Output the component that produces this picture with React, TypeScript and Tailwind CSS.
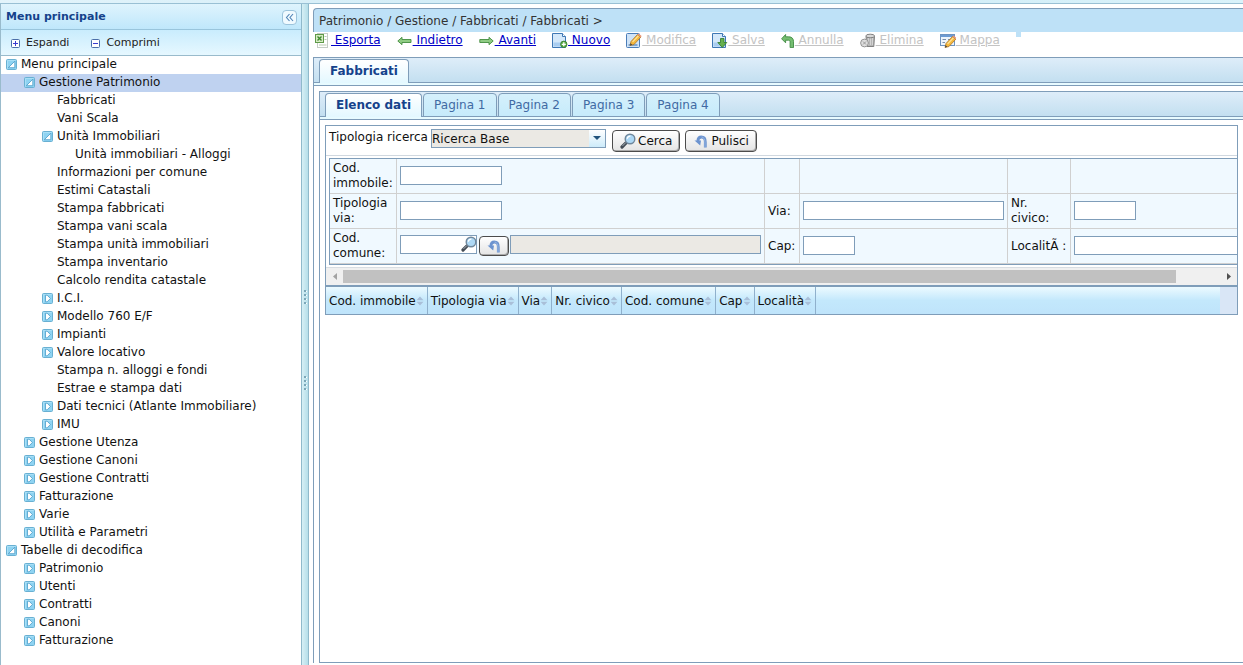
import type { ReactNode } from "react";

type Node = {
  label: string;
  level: 0 | 1 | 2 | 3;
  state?: "open" | "closed";
  selected?: boolean;
};

const tree: Node[] = [
  { label: "Menu principale", level: 0, state: "open" },
  { label: "Gestione Patrimonio", level: 1, state: "open", selected: true },
  { label: "Fabbricati", level: 2 },
  { label: "Vani Scala", level: 2 },
  { label: "Unità Immobiliari", level: 2, state: "open" },
  { label: "Unità immobiliari - Alloggi", level: 3 },
  { label: "Informazioni per comune", level: 2 },
  { label: "Estimi Catastali", level: 2 },
  { label: "Stampa fabbricati", level: 2 },
  { label: "Stampa vani scala", level: 2 },
  { label: "Stampa unità immobiliari", level: 2 },
  { label: "Stampa inventario", level: 2 },
  { label: "Calcolo rendita catastale", level: 2 },
  { label: "I.C.I.", level: 2, state: "closed" },
  { label: "Modello 760 E/F", level: 2, state: "closed" },
  { label: "Impianti", level: 2, state: "closed" },
  { label: "Valore locativo", level: 2, state: "closed" },
  { label: "Stampa n. alloggi e fondi", level: 2 },
  { label: "Estrae e stampa dati", level: 2 },
  { label: "Dati tecnici (Atlante Immobiliare)", level: 2, state: "closed" },
  { label: "IMU", level: 2, state: "closed" },
  { label: "Gestione Utenza", level: 1, state: "closed" },
  { label: "Gestione Canoni", level: 1, state: "closed" },
  { label: "Gestione Contratti", level: 1, state: "closed" },
  { label: "Fatturazione", level: 1, state: "closed" },
  { label: "Varie", level: 1, state: "closed" },
  { label: "Utilità e Parametri", level: 1, state: "closed" },
  { label: "Tabelle di decodifica", level: 0, state: "open" },
  { label: "Patrimonio", level: 1, state: "closed" },
  { label: "Utenti", level: 1, state: "closed" },
  { label: "Contratti", level: 1, state: "closed" },
  { label: "Canoni", level: 1, state: "closed" },
  { label: "Fatturazione", level: 1, state: "closed" },
];

const indent = {
  0: "pl-[5px]",
  1: "pl-[23px]",
  2: "pl-[41px]",
  3: "pl-[59px]",
};

const columns = [
  "Cod. immobile",
  "Tipologia via",
  "Via",
  "Nr. civico",
  "Cod. comune",
  "Cap",
  "Località",
];

function TreeIcon({ state }: { state: "open" | "closed" }) {
  return (
    <svg width="11" height="11" viewBox="0 0 11 11">
      <rect x="0.5" y="0.5" width="10" height="10" rx="1" fill="#8ed3f2" stroke="#69b0d2" />
      <path d="M1.5 9.5V1.5H9.5" fill="none" stroke="#a9dff6" />
      {state === "open" ? (
        <path d="M8.8 2.2V8.7H2.3Z" fill="#fff" stroke="#4a9cc8" strokeWidth="0.8" />
      ) : (
        <path d="M3.5 2.2H5.2L8.4 5.5L5.2 8.8H3.5Z" fill="#fff" stroke="#4a9cc8" strokeWidth="0.8" />
      )}
    </svg>
  );
}

function BoxIcon({ plus }: { plus?: boolean }) {
  return (
    <svg width="9" height="9" viewBox="0 0 9 9">
      <rect x="0.5" y="0.5" width="8" height="8" rx="1" fill="#fff" stroke="#4a6ea9" />
      <path d={plus ? "M2 4.5H7M4.5 2V7" : "M2 4.5H7"} stroke="#3b3bd0" />
    </svg>
  );
}

function Icon({ width = 16, children }: { width?: number; children: ReactNode }) {
  return (
    <svg width={width} height="16" viewBox={`0 0 ${width} 16`} className="shrink-0">
      {children}
    </svg>
  );
}

const PageShape = () => (
  <>
    <path d="M0.5 1.5H10.5L13.5 4.5V15.5H0.5Z" fill="#d4e8fa" stroke="#3f78b5" />
    <path d="M1.5 10.5H12.5V14.5H1.5Z" fill="#a9cdf0" />
    <path d="M10.5 1.5V4.5H13.5" fill="#fff" stroke="#3f78b5" />
  </>
);

const Pencil = () => (
  <>
    <path d="M4 13.5L5 9.5L11.5 2.5L14.8 5.2L8 12.5Z" fill="#f5b83d" stroke="#a8742a" strokeWidth="0.8" />
    <path d="M6.6 9.8L12.4 3.9" stroke="#fde7a0" strokeWidth="1.2" />
    <path d="M4 13.5L4.6 11.2L6.3 12.8Z" fill="#444" />
    <path d="M11.5 2.5L12.5 1.4L15.7 4.1L14.8 5.2Z" fill="#e9967a" />
  </>
);

const ResetArrow = () => (
  <>
    <path d="M12.3 14.5V9C12.3 5.5 10.6 4 8.3 4C6 4 5 5.8 4.8 8" fill="none" stroke="#6c93cf" strokeWidth="2.8" />
    <path d="M1.5 7.5H8L7.2 12.5L5.5 11Z" fill="#6c93cf" />
    <path d="M12 14V9C12 6 10.8 4.4 8.6 4" fill="none" stroke="#97b6e2" />
  </>
);

const Magnifier = () => (
  <>
    <path d="M6.3 9.7L2 14" stroke="#444c55" strokeWidth="3.2" strokeLinecap="round" />
    <path d="M6 9.4L2.5 12.9" stroke="#a9b3bb" strokeWidth="1" />
    <circle cx="10" cy="6" r="4.8" fill="#add8f5" stroke="#70879b" strokeWidth="1.4" />
    <path d="M7.3 5.8C7.5 4.2 8.8 3.2 10.4 3.2" stroke="#fff" strokeWidth="1.2" fill="none" />
  </>
);

const actions: { label: string; disabled?: boolean; width?: number; icon: ReactNode }[] = [
  {
    label: "Esporta",
    icon: (
      <>
        <path d="M2.5 1.5H12.5V15.5H2.5Z" fill="#fff" stroke="#8a9a8a" strokeDasharray="1 1" />
        <path d="M9.5 4.5H11.5M9.5 7.5H11.5M4 13H11.5" stroke="#b8c8b0" />
        <rect x="0.5" y="2.5" width="8" height="8" fill="#d6ebc3" stroke="#5f9a48" />
        <path d="M2.5 4.5L6.5 8.5M6.5 4.5L2.5 8.5" stroke="#3d8a2c" strokeWidth="1.4" />
      </>
    ),
  },
  {
    label: "Indietro",
    icon: (
      <path d="M0.8 9L5 5.3V7.5H14V10.5H5V12.7Z" fill="#8fcb83" stroke="#438c3e" strokeWidth="0.9" />
    ),
  },
  {
    label: "Avanti",
    icon: (
      <path d="M14.2 9L10 5.3V7.5H0.8V10.5H10V12.7Z" fill="#8fcb83" stroke="#438c3e" strokeWidth="0.9" />
    ),
  },
  {
    label: "Nuovo",
    icon: (
      <>
        <PageShape />
        <circle cx="11.8" cy="12.3" r="3.2" fill="#5fae4a" stroke="#2f7a2a" strokeWidth="0.8" />
        <path d="M9.8 12.3H13.8M11.8 10.3V14.3" stroke="#fff" strokeWidth="1.3" />
      </>
    ),
  },
  {
    label: "Modifica",
    disabled: true,
    icon: (
      <>
        <rect x="0.5" y="1.5" width="13" height="14" rx="1" fill="#cfe3f7" stroke="#4a7db8" />
        <path d="M2.5 13H11.5" stroke="#7da7d6" strokeWidth="2" />
        <Pencil />
      </>
    ),
  },
  {
    label: "Salva",
    disabled: true,
    icon: (
      <>
        <PageShape />
        <path d="M8.5 6.5H12V10.5H14.8L10.3 15.5L5.8 10.5H8.5Z" fill="#67b04e" stroke="#2f7a2a" strokeWidth="0.8" />
      </>
    ),
  },
  {
    label: "Annulla",
    disabled: true,
    width: 14,
    icon: (
      <path d="M0.6 6.8L4.6 2.5V4.8H7.5C11 4.8 12.5 6.8 12.5 9.5V15.6H9.1V10C9.1 8.8 8.5 8.2 7.5 8.2H4.6V10.8Z" fill="#74bd70" stroke="#3f8a42" strokeWidth="0.9" />
    ),
  },
  {
    label: "Elimina",
    disabled: true,
    icon: (
      <>
        <path d="M6 4.5H14.5L13.8 14.5H7Z" fill="#b5b5b5" stroke="#777" strokeWidth="0.9" />
        <path d="M8.5 6V13M10.5 6V13M12.5 6V13" stroke="#d4d4d4" />
        <ellipse cx="10.2" cy="4" rx="4.4" ry="1.8" fill="#d8d8d8" stroke="#777" strokeWidth="0.9" />
        <circle cx="4.5" cy="11" r="3.9" fill="#dedede" stroke="#8a8a8a" strokeWidth="0.9" />
        <path d="M3 9.5L6 12.5M6 9.5L3 12.5" stroke="#9a9a9a" />
      </>
    ),
  },
  {
    label: "Mappa",
    disabled: true,
    icon: (
      <>
        <rect x="0.5" y="2.5" width="14" height="11" fill="#eef5fc" stroke="#6f94c0" />
        <path d="M1 4H14" stroke="#6d9bd3" strokeWidth="2" />
        <path d="M2.5 7.5H6M2.5 10.5H5M8 7.5H12" stroke="#7b8fa8" />
        <g transform="translate(1 2)">
          <Pencil />
        </g>
      </>
    ),
  },
];

function Tab({ label, active }: { label: string; active?: boolean }) {
  return (
    <button
      role="tab"
      aria-selected={!!active}
      className={
        active
          ? "h-6 rounded-t border border-b-0 border-[#7f9db9] bg-gradient-to-b from-white to-[#e3f8ff] px-2.5 pb-0.5 font-bold text-[#15428b]"
          : "h-6 rounded-t border border-[#7f9db9] bg-gradient-to-b from-[#d5f0fc] to-[#c6ebfb] px-2.5 text-[#416aa3]"
      }
    >
      {label}
    </button>
  );
}

function TabStrip({ children }: { children: ReactNode }) {
  return (
    <div className="border-y border-[#7f9db9] bg-[#e8fbff] pb-0.5">
      <div
        role="tablist"
        className="flex h-[25px] items-end border-b border-[#7f9db9] bg-gradient-to-b from-[#deedf9] to-[#c3dff0] pl-[5px]"
      >
        <div className="-mb-px flex gap-px">{children}</div>
      </div>
    </div>
  );
}

function Field({ id, className }: { id: string; className: string }) {
  return (
    <input
      id={id}
      type="text"
      className={`block h-[19px] border border-[#7f9db9] bg-white px-1 ${className}`}
    />
  );
}

const cell = "h-[35px] border-r border-b border-[#d0d0d0] px-[3px] leading-[15px]";
const fieldCell = `${cell} pb-0.5`;
const button =
  "flex items-center rounded-sm border border-[#4c4c4c] bg-gradient-to-b from-white to-[#e4e4e4] shadow-[inset_-1px_-1px_0_#aaa]";

function Sidebar() {
  return (
    <aside className="flex w-[301px] shrink-0 flex-col border-l border-[#99bbcc]">
      <div className="flex h-[26px] items-center justify-between border-b border-[#99c5dc] bg-gradient-to-b from-[#dff4fd] to-[#bfe7fb] pt-0.5 pr-1 pl-[5px]">
        <h2 className="text-[11px] font-bold text-[#15428b]">Menu principale</h2>
        <button
          aria-label="Chiudi il menu"
          className="flex h-[15px] w-[15px] items-center justify-center rounded-sm border border-[#9cc4dc] bg-[#f0faff]"
        >
          <svg width="9" height="9" viewBox="0 0 9 9">
            <path d="M4.5 1L1.5 4.5L4.5 8M8 1L5 4.5L8 8" fill="none" stroke="#4f83b5" strokeWidth="1.1" />
          </svg>
        </button>
      </div>
      <div className="flex h-[26px] items-center border-b border-[#99bbcc] bg-gradient-to-b from-[#c9ecfd] to-[#e6f8ff] pt-0.5 pl-2.5 text-[11px] text-[#222]">
        <button className="flex items-center gap-1.5">
          <BoxIcon plus />
          Espandi
        </button>
        <button className="ml-[22px] flex items-center gap-1.5">
          <BoxIcon />
          Comprimi
        </button>
      </div>
      <ul>
        {tree.map((node, i) => (
          <li
            key={i}
            className={`flex h-[18px] items-center pb-0.5 ${indent[node.level]} ${
              node.selected ? "bg-[#bfd2f0]" : ""
            }`}
          >
            <span className="w-[15px] pt-px">
              {node.state && <TreeIcon state={node.state} />}
            </span>
            <a href="#" className="leading-4 whitespace-nowrap">
              {node.label}
            </a>
          </li>
        ))}
      </ul>
    </aside>
  );
}

function Dots() {
  return (
    <svg width="4" height="14" viewBox="0 0 4 14">
      {[0, 4, 8, 12].map((y) => (
        <g key={y}>
          <rect x="1" y={y + 1} width="3" height="1" fill="#fff" />
          <rect x="1" y={y} width="2" height="2" fill="#7ba7b8" />
        </g>
      ))}
    </svg>
  );
}

function SearchForm() {
  return (
    <form onSubmit={(e) => e.preventDefault()}>
      <div className="flex h-[30px] items-start border-b border-[#d0d8e0] pt-[3px] pl-[3px]">
        <label htmlFor="tipo" className="w-[102px] whitespace-nowrap">
          Tipologia ricerca
        </label>
        <div className="relative">
          <select
            id="tipo"
            className="block h-[19px] w-[175px] appearance-none border border-[#7f9db9] bg-[#ebe9e4]"
          >
            <option>Ricerca Base</option>
          </select>
          <span className="pointer-events-none absolute top-px right-px flex h-[17px] w-4 justify-center bg-gradient-to-b from-white to-[#cdebfa] pt-1.5">
            <svg width="8" height="4" viewBox="0 0 8 4">
              <path d="M0 0H8L4 4Z" fill="#22547d" />
            </svg>
          </span>
        </div>
        <button type="submit" className={`${button} ml-1.5 mt-px h-[22px] gap-0.5 px-[7px]`}>
          <Icon>
            <Magnifier />
          </Icon>
          Cerca
        </button>
        <button type="reset" className={`${button} ml-[5px] mt-px h-[22px] gap-0.5 px-[7px]`}>
          <Icon>
            <ResetArrow />
          </Icon>
          Pulisci
        </button>
      </div>

      <div className="overflow-hidden pt-0.5 pb-0.5 pl-[3px]">
        <table className="w-[975px] table-fixed border-separate border-spacing-0 border border-[#7f9db9] bg-[#f0f9ff]">
          <colgroup>
            <col className="w-[67px]" />
            <col className="w-[368px]" />
            <col className="w-[35px]" />
            <col className="w-[208px]" />
            <col className="w-[63px]" />
            <col />
          </colgroup>
          <tbody>
            <tr>
              <td className={cell}>
                <label htmlFor="immobile">Cod. immobile:</label>
              </td>
              <td className={fieldCell}>
                <Field id="immobile" className="w-[102px]" />
              </td>
              <td className={cell} />
              <td className={cell} />
              <td className={cell} />
              <td className={cell} />
            </tr>
            <tr>
              <td className={cell}>
                <label htmlFor="tipovia">Tipologia via:</label>
              </td>
              <td className={fieldCell}>
                <Field id="tipovia" className="w-[102px]" />
              </td>
              <td className={cell}>
                <label htmlFor="via">Via:</label>
              </td>
              <td className={fieldCell}>
                <Field id="via" className="w-full" />
              </td>
              <td className={cell}>
                <label htmlFor="civico">Nr. civico:</label>
              </td>
              <td className={fieldCell}>
                <Field id="civico" className="w-[62px]" />
              </td>
            </tr>
            <tr>
              <td className={cell}>
                <label htmlFor="comune">Cod. comune:</label>
              </td>
              <td className={fieldCell}>
                <div className="flex items-start">
                  <div className="relative">
                    <Field id="comune" className="w-[77px] pr-5" />
                    <button type="button" aria-label="Cerca comune" className="absolute top-px right-0">
                      <Icon>
                        <Magnifier />
                      </Icon>
                    </button>
                  </div>
                  <button
                    type="button"
                    aria-label="Pulisci comune"
                    className={`${button} ml-0.5 mt-px h-[20px] w-[30px] justify-center`}
                  >
                    <Icon>
                      <ResetArrow />
                    </Icon>
                  </button>
                  <input
                    type="text"
                    disabled
                    aria-label="Descrizione comune"
                    className="ml-px h-[19px] min-w-0 flex-1 border border-[#7f9db9] bg-[#ebe9e4]"
                  />
                </div>
              </td>
              <td className={cell}>
                <label htmlFor="cap">Cap:</label>
              </td>
              <td className={fieldCell}>
                <Field id="cap" className="w-[52px]" />
              </td>
              <td className={`${cell} whitespace-nowrap`}>
                <label htmlFor="localita">LocalitÃ :</label>
              </td>
              <td className={fieldCell}>
                <Field id="localita" className="w-full" />
              </td>
            </tr>
          </tbody>
        </table>
      </div>
    </form>
  );
}

function ScrollBar() {
  return (
    <div className="flex h-[18px] items-center border-t border-[#d8dde2] bg-[#f0f0f0]">
      <div className="flex w-[17px] shrink-0 justify-center">
        <svg width="4" height="7" viewBox="0 0 4 7">
          <path d="M4 0V7L0 3.5Z" fill="#a3a3a3" />
        </svg>
      </div>
      <div className="flex-1">
        <div className="h-[13px] w-[95%] bg-[#c1c1c1]" />
      </div>
      <div className="flex w-[17px] shrink-0 justify-center">
        <svg width="4" height="7" viewBox="0 0 4 7">
          <path d="M0 0V7L4 3.5Z" fill="#505050" />
        </svg>
      </div>
    </div>
  );
}

function ResultsHeader() {
  return (
    <div className="flex border-t-2 border-[#7f9db9] bg-gradient-to-b from-[#ecfaff] via-[#c3e8fc] to-[#bfe4fb]">
      <table className="border-separate border-spacing-0">
        <thead>
          <tr>
            {columns.map((c) => (
              <th
                key={c}
                scope="col"
                className="h-[27px] border-r border-[#8fb0cc] px-[3px] font-normal whitespace-nowrap"
              >
                <span className="flex items-center">
                  {c}
                  <svg width="8" height="10" viewBox="0 0 8 10">
                    <path d="M0.5 4.2H7.5L4 0.5ZM0.5 5.8H7.5L4 9.5Z" fill="#a9bfd8" />
                  </svg>
                </span>
              </th>
            ))}
          </tr>
        </thead>
      </table>
      <div className="ml-auto w-[17px] bg-[#d9e6f6]" />
    </div>
  );
}

export default function App() {
  return (
    <div className="flex min-h-screen flex-col bg-white font-['DejaVu_Sans',Verdana,sans-serif] text-xs text-[#111]">
      <div className="h-1 border-b border-[#99c0d4] bg-gradient-to-r from-[#e3f4fb] via-[#cdeaf5] to-[#d9f2fa]" />
      <div className="flex flex-1">
        <Sidebar />
        <div className="flex w-2 shrink-0 flex-col items-center justify-center gap-[72px] border-x border-[#8fb9cb] bg-gradient-to-r from-[#d6eff5] to-[#b5dee9] pt-2.5">
          <Dots />
          <Dots />
        </div>

        <main className="flex min-w-0 flex-1 flex-col overflow-hidden pt-1 pb-0.5 pl-1">
          <nav className="flex h-6 items-center rounded-tl border-t border-l border-[#7f9db9] bg-[#bee1f7] pl-[5px] text-[#333]">
            Patrimonio / Gestione / Fabbricati / Fabbricati &gt;
          </nav>
          <div className="flex h-[25px] items-start gap-4 pl-0.5">
            {actions.map((a) => (
              <a
                key={a.label}
                href="#"
                aria-disabled={a.disabled}
                className={`flex items-start whitespace-pre ${
                  a.disabled ? "text-[#c3c3c3]" : "text-[#0000c8]"
                }`}
              >
                <Icon width={a.width}>{a.icon}</Icon>
                <span className="underline">{" " + a.label}</span>
              </a>
            ))}
            <span className="h-[5px] w-[5px] bg-[#bee1f7]" />
          </div>

          <section className="flex flex-1 flex-col border-l border-[#7f9db9]">
            <TabStrip>
              <Tab label="Fabbricati" active />
            </TabStrip>
            <div className="mt-[5px] ml-[5px] flex flex-1 flex-col border-b border-l border-[#7f9db9]">
              <TabStrip>
                <Tab label="Elenco dati" active />
                <Tab label="Pagina 1" />
                <Tab label="Pagina 2" />
                <Tab label="Pagina 3" />
                <Tab label="Pagina 4" />
              </TabStrip>
              <div className="mt-[5px] mr-[5px] ml-[5px] border border-[#7f9db9]">
                <SearchForm />
                <ScrollBar />
                <ResultsHeader />
              </div>
            </div>
          </section>
        </main>
      </div>
    </div>
  );
}
